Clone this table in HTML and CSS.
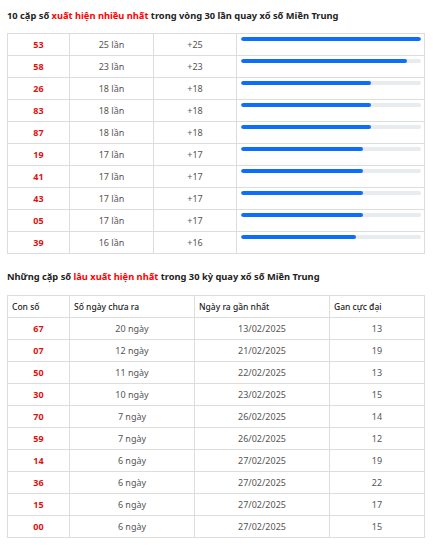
FILE: index.html
```html
<!DOCTYPE html>
<html lang="vi">
<head>
<meta charset="utf-8">
<link rel="stylesheet" href="styles.css">
</head>
<body>
<div class="page">
  <h2 class="title">10 cặp số <span class="hl">xuất hiện nhiều nhất</span> trong vòng 30 lần quay xổ số Miền Trung</h2>
  <table class="tbl tbl-freq">
    <colgroup><col class="c1"><col class="c2"><col class="c3"><col class="c4"></colgroup>
    <tbody>
      <tr><td class="num">53</td><td>25 lần</td><td>+25</td><td class="barcell"><div class="track"><div class="bar" style="width:100%"></div></div></td></tr>
      <tr><td class="num">58</td><td>23 lần</td><td>+23</td><td class="barcell"><div class="track"><div class="bar" style="width:92%"></div></div></td></tr>
      <tr><td class="num">26</td><td>18 lần</td><td>+18</td><td class="barcell"><div class="track"><div class="bar" style="width:72%"></div></div></td></tr>
      <tr><td class="num">83</td><td>18 lần</td><td>+18</td><td class="barcell"><div class="track"><div class="bar" style="width:72%"></div></div></td></tr>
      <tr><td class="num">87</td><td>18 lần</td><td>+18</td><td class="barcell"><div class="track"><div class="bar" style="width:72%"></div></div></td></tr>
      <tr><td class="num">19</td><td>17 lần</td><td>+17</td><td class="barcell"><div class="track"><div class="bar" style="width:68%"></div></div></td></tr>
      <tr><td class="num">41</td><td>17 lần</td><td>+17</td><td class="barcell"><div class="track"><div class="bar" style="width:68%"></div></div></td></tr>
      <tr><td class="num">43</td><td>17 lần</td><td>+17</td><td class="barcell"><div class="track"><div class="bar" style="width:68%"></div></div></td></tr>
      <tr><td class="num">05</td><td>17 lần</td><td>+17</td><td class="barcell"><div class="track"><div class="bar" style="width:68%"></div></div></td></tr>
      <tr><td class="num">39</td><td>16 lần</td><td>+16</td><td class="barcell"><div class="track"><div class="bar" style="width:64%"></div></div></td></tr>
    </tbody>
  </table>

  <h2 class="title title2">Những cặp số <span class="hl">lâu xuất hiện nhất</span> trong 30 kỳ quay xổ số Miền Trung</h2>
  <table class="tbl tbl-gan">
    <colgroup><col class="g1"><col class="g2"><col class="g3"><col class="g4"></colgroup>
    <thead>
      <tr><th>Con số</th><th>Số ngày chưa ra</th><th>Ngày ra gần nhất</th><th>Gan cực đại</th></tr>
    </thead>
    <tbody>
      <tr><td class="num">67</td><td>20 ngày</td><td>13/02/2025</td><td>13</td></tr>
      <tr><td class="num">07</td><td>12 ngày</td><td>21/02/2025</td><td>19</td></tr>
      <tr><td class="num">50</td><td>11 ngày</td><td>22/02/2025</td><td>13</td></tr>
      <tr><td class="num">30</td><td>10 ngày</td><td>23/02/2025</td><td>15</td></tr>
      <tr><td class="num">70</td><td>7 ngày</td><td>26/02/2025</td><td>14</td></tr>
      <tr><td class="num">59</td><td>7 ngày</td><td>26/02/2025</td><td>12</td></tr>
      <tr><td class="num">14</td><td>6 ngày</td><td>27/02/2025</td><td>19</td></tr>
      <tr><td class="num">36</td><td>6 ngày</td><td>27/02/2025</td><td>22</td></tr>
      <tr><td class="num">15</td><td>6 ngày</td><td>27/02/2025</td><td>17</td></tr>
      <tr><td class="num">00</td><td>6 ngày</td><td>27/02/2025</td><td>15</td></tr>
    </tbody>
  </table>
</div>
</body>
</html>
```
FILE: styles.css
```css
html, body {
  margin: 0;
  padding: 0;
  background: #ffffff;
}
body {
  font-family: "Noto Sans", "Open Sans", sans-serif;
  color: #333;
}
.page {
  padding: 8px 9px 0 7px;
}
.title {
  margin: 0 0 9px 0;
  font-size: 9.3px;
  line-height: 16px;
  font-weight: 700;
  color: #222;
}
.title2 {
  margin-top: 15px;
  margin-bottom: 10px;
}
.hl {
  color: #ff0000;
}
.tbl {
  width: 417px;
  border-collapse: collapse;
  table-layout: fixed;
  font-size: 9px;
}
.tbl tr {
  height: 22px;
}
.tbl td, .tbl th {
  border: 1px solid #dddddd;
  padding: 0 4px;
  text-align: center;
  color: #555;
  font-weight: 400;
  vertical-align: middle;
}
.tbl th {
  text-align: left;
  font-size: 8.5px;
  font-weight: 500;
  color: #222;
}
.tbl td.num {
  color: #dd1111;
  font-weight: 700;
}
.c1 { width: 62px; }
.c2 { width: 84px; }
.c3 { width: 83px; }
.c4 { width: 188px; }
.g1 { width: 62px; }
.g2 { width: 125px; }
.g3 { width: 135px; }
.g4 { width: 95px; }
.tbl td.barcell {
  vertical-align: top;
  padding: 3px 3px 0 4px;
}
.track {
  height: 4px;
  background: #e9ecef;
  border-radius: 2px;
  overflow: hidden;
}
.bar {
  height: 100%;
  background: #0d6efd;
  border-radius: 2px;
}
```
